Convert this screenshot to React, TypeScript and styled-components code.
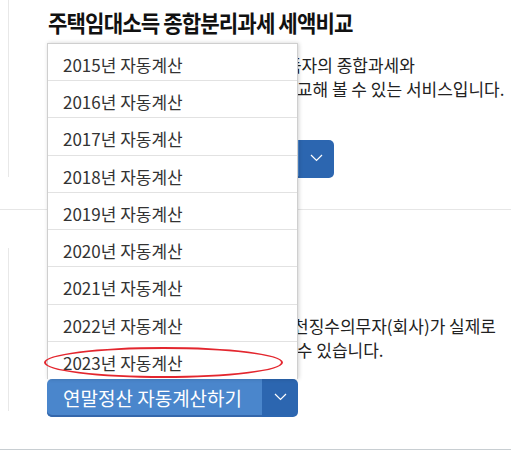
import React from "react";
import styled, { createGlobalStyle } from "styled-components";

const Global = createGlobalStyle`
  html, body { margin: 0; padding: 0; background: #fff; }
  body { font-family: "Noto Sans CJK KR", "Noto Sans", sans-serif; color: #222; }
  * { box-sizing: border-box; }
`;

const Page = styled.div`
  width: 511px;
  overflow: hidden;
`;

const Section = styled.section<{ $height: number }>`
  position: relative;
  margin-left: 8px;
  padding-left: 38px;
  height: ${(p) => p.$height}px;
  border-left: 1px solid #e8e8e8;
  display: flex;
  flex-direction: column;
  align-items: flex-start;
`;

const Title = styled.h2`
  margin: 7px 0 0 1px;
  font-size: 23px;
  line-height: 30px;
  font-weight: 700;
  letter-spacing: -1px;
  color: #111;
  white-space: nowrap;
  transform: scaleX(0.92);
  transform-origin: left center;
`;

const Desc = styled.p<{ $top: number }>`
  margin: ${(p) => p.$top}px 0 0;
  font-size: 17px;
  line-height: 24px;
  color: #222;
  white-space: nowrap;
`;

const Divider = styled.hr<{ $color: string; $top: number; $bottom: number }>`
  margin: ${(p) => p.$top}px 0 ${(p) => p.$bottom}px;
  border: 0;
  height: 1px;
  background: ${(p) => p.$color};
`;

const SplitButton = styled.div<{ $top: number }>`
  position: relative;
  margin-top: ${(p) => p.$top}px;
  display: inline-flex;
  height: 38px;
  border-radius: 5px;
  flex-shrink: 0;
`;

const MainButton = styled.button<{ $width: number }>`
  width: ${(p) => p.$width}px;
  height: 100%;
  border: 0;
  border-radius: 5px 0 0 5px;
  background: #4a86cc;
  box-shadow: inset 0 -2px 0 #3467ab;
  color: #fff;
  font-family: inherit;
  font-size: 19px;
  text-align: left;
  padding: 0 0 2px 16px;
  white-space: nowrap;
`;

const CaretButton = styled.button<{ $width: number }>`
  width: ${(p) => p.$width}px;
  height: 100%;
  border: 0;
  border-radius: 0 5px 5px 0;
  background: #2c66b0;
  display: flex;
  align-items: center;
  justify-content: center;
  padding: 0 0 2px;
`;

const Menu = styled.ul`
  position: absolute;
  left: 0;
  bottom: 100%;
  width: 251px;
  margin: 0;
  padding: 0;
  list-style: none;
  background: #fff;
  border: 1px solid #cfcfcf;
  border-bottom: 0;
  box-shadow: 1px 0 4px rgba(0, 0, 0, 0.18);
  z-index: 5;
`;

const MenuItem = styled.li`
  position: relative;
  height: 37.25px;
  padding: 5px 0 0 15px;
  display: flex;
  align-items: center;
  border-bottom: 1px solid #e2e2e2;
  font-size: 17px;
  color: #333;
  white-space: nowrap;
  &:last-child { border-bottom: 0; }
`;

const Highlight = styled.span`
  position: absolute;
  left: -4px;
  top: 5px;
  width: 239px;
  height: 31px;
  border: 2px solid #e3262e;
  border-radius: 50%;
  pointer-events: none;
`;

const Chevron = () => (
  <svg width="13" height="8" viewBox="0 0 13 8" fill="none">
    <polyline points="1,1 6.5,6.5 12,1" stroke="#fff" strokeWidth="1.2" />
  </svg>
);

const years = [2015, 2016, 2017, 2018, 2019, 2020, 2021, 2022, 2023];

export default function App() {
  return (
    <Page>
      <Global />
      <Section $height={177}>
        <Title>주택임대소득 종합분리과세 세액비교</Title>
        <Desc $top={16}>
          임대 소득이 있는 경우, 주택임대소득자의 종합과세와
          <br />
          분리과세를 선택했을 때의 세액을 비교해 볼 수 있는 서비스입니다.
        </Desc>
        <SplitButton $top={39}>
          <MainButton $width={252}>주택임대소득 세액비교하기</MainButton>
          <CaretButton $width={35}>
            <Chevron />
          </CaretButton>
        </SplitButton>
      </Section>
      <Divider $color="#e6e6e6" $top={32} $bottom={38} />
      <Section $height={163}>
        <Title>연말정산 자동계산</Title>
        <Desc $top={29}>
          근로소득자들의 연말정산 결과를 원천징수의무자(회사)가 실제로
          <br />
          계산하는 결과를 사전에 미리확인할 수 있습니다.
        </Desc>
        <SplitButton $top={17}>
          <Menu>
            {years.map((y) => (
              <MenuItem key={y}>
                {y}년 자동계산
                {y === 2023 && <Highlight />}
              </MenuItem>
            ))}
          </Menu>
          <MainButton $width={215}>연말정산 자동계산하기</MainButton>
          <CaretButton $width={36}>
            <Chevron />
          </CaretButton>
        </SplitButton>
      </Section>
      <Divider $color="#c8ced2" $top={38} $bottom={0} />
    </Page>
  );
}
